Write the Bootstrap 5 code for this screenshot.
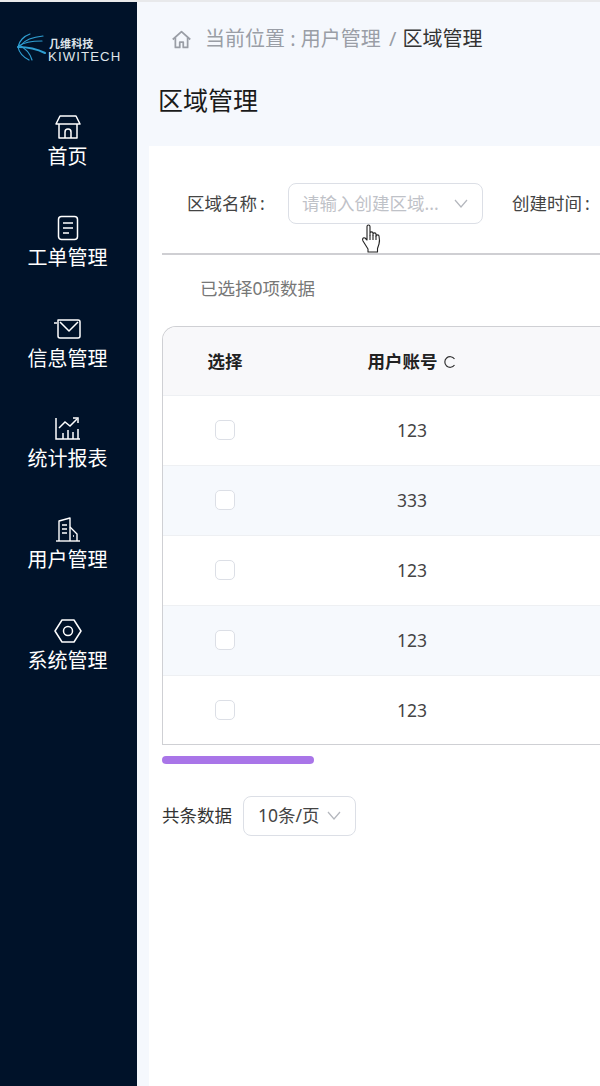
<!DOCTYPE html>
<html lang="zh-CN">
<head>
<meta charset="utf-8">
<title>区域管理</title>
<link href="https://cdn.jsdelivr.net/npm/bootstrap@5.3.0/dist/css/bootstrap.min.css" rel="stylesheet">
<style>
html,body{height:1086px;overflow:hidden}
body{font-family:"Noto Sans","Noto Sans CJK SC",sans-serif;background:#f5f8fd;font-size:17.5px;color:#333;width:600px}
.shell{height:1086px;width:600px;overflow:hidden;border-top:2px solid #e8e9eb}
.side{width:137px;flex:none;background:#001229;color:#fff}
.brand{height:60px;margin-top:31px;padding-left:16px;gap:2px}
.brand-txt{line-height:1;color:#dfe5ea;padding-top:5px}
.brand-cn{font-size:11px;font-weight:700;letter-spacing:.1px;padding-left:1px;margin-bottom:0}
.brand-en{font-family:"Liberation Sans",sans-serif;font-size:13.2px;letter-spacing:1.1px;margin-top:1px}
.menu-list{margin-top:20px}
.menu-item{height:100.8px;font-size:20px;line-height:28px;color:#fff;padding-right:2px}
.menu-item svg{display:block;height:28px;width:28px}
.menu-item span{display:block;margin-top:2px}
.main-col{flex:none;width:463px}
.crumbs{height:74px;padding-left:34px;font-size:20px;color:#9a9ea6}
.crumbs svg{margin-right:13px;width:21px;height:21px}
.crumbs b{font-weight:400;color:#333}
.crumb-sep{margin:0 1px 0 3px}
.page-title{font-size:25px;font-weight:400;color:#1a1a1a;margin:0;padding-left:21px;height:70px;line-height:49px}
.panel{background:#fff;margin-left:12px;height:942px;padding-left:13px;overflow:hidden}
.filter-row{height:109px;padding-top:7px;border-bottom:2px solid #cfcfd3;margin-right:-60px;padding-left:25px;white-space:nowrap}
.filter-box{width:195px;height:41px;margin:0 29px 0 23px;border:1px solid #dcdfe6;border-radius:8px;padding:0 14px 0 13px;color:#bfc2c8;flex:none}
.flab{color:#444;flex:none;width:78px;padding-top:1px}
.picked{height:71px;padding-left:38px;padding-bottom:4px;color:#777;font-size:17.5px}
.grid-wrap{width:480px;height:419px;border:1px solid #cfd0d4;border-right:0;border-top-left-radius:14px;overflow:hidden}
.grid-tb{table-layout:fixed;width:480px;margin:0;color:#444;--bs-table-bg:transparent}
.grid-tb th,.grid-tb td{text-align:center;vertical-align:middle;padding:0;border-bottom:1px solid #eef0f3}
.grid-tb th{height:68px;background:#f8f8fa;color:#222;font-weight:700}
.grid-tb td{height:70px}
.grid-tb tr:last-child td{border-bottom:0}
.grid-tb .alt td{background:#f6f9fd}
.tick{display:block;width:20px;height:20px;margin:0 auto;border:1px solid #dcdfe6;border-radius:5px;background:#fff}
.refresh{font-weight:400;margin-left:5px;display:inline-block;width:14px;height:14px;vertical-align:-1px}
.scroll-thumb{width:152px;height:7.5px;border-radius:4px;background:#a975e8;margin-top:11px}
.pager{margin-top:32px;gap:11px;color:#333}
.page-box{width:113px;height:40px;border:1px solid #dcdfe6;border-radius:8px;padding:0 14px;color:#444}
.pointer{position:absolute;left:361px;top:224px;width:22px;height:29px}
</style>
</head>
<body>
<div class="shell d-flex">
  <aside class="side">
    <div class="brand d-flex align-items-start">
      <svg width="30" height="28" viewBox="0 0 30 28" fill="none" stroke="#2f9fd2" stroke-width="1.2" stroke-linecap="round">
        <path d="M14 1C8 3 3 8 2 14c1 5 5 10 11 13"/>
        <path d="M27 3C17 4 9 7 5 12"/>
        <path d="M26 8C16 8 8 9 3 13"/>
        <path d="M2 14c7 0 17 1 27 6" stroke-width="2"/>
        <path d="M3 12c6 3 11 8 13 15"/>
      </svg>
      <div class="brand-txt">
        <div class="brand-cn">几维科技</div>
        <div class="brand-en">KIWITECH</div>
      </div>
    </div>
    <nav class="menu-list">
      <a class="menu-item d-flex flex-column align-items-center text-decoration-none">
        <svg viewBox="0 0 28 28" fill="none" stroke="#fff" stroke-width="1.5" stroke-linejoin="round"><path d="M6 3h16l4 8H2z"/><path d="M5 11v14h18V11"/><path d="M11 25v-6a3 3 0 0 1 6 0v6"/></svg>
        <span>首页</span>
      </a>
      <a class="menu-item d-flex flex-column align-items-center text-decoration-none">
        <svg viewBox="0 0 28 28" fill="none" stroke="#fff" stroke-width="1.5" stroke-linejoin="round"><rect x="4.500" y="2.500" width="19" height="23" rx="3"/><path d="M9 9h10M9 14h10M9 19h6"/></svg>
        <span>工单管理</span>
      </a>
      <a class="menu-item d-flex flex-column align-items-center text-decoration-none">
        <svg viewBox="0 0 28 28" fill="none" stroke="#fff" stroke-width="1.5" stroke-linejoin="round"><path d="M4 5h20a2 2 0 0 1 2 2v14a2 2 0 0 1-2 2H6a2 2 0 0 1-2-2z"/><path d="M6 7l9 9 9-9"/><path d="M0 8h3"/></svg>
        <span>信息管理</span>
      </a>
      <a class="menu-item d-flex flex-column align-items-center text-decoration-none">
        <svg viewBox="0 0 28 28" fill="none" stroke="#fff" stroke-width="1.5"><path d="M2 3v21h24"/><path d="M9 24v-6M14 24v-9M19 24v-7M24 24v-10"/><path d="M5 13l6-6 5 4 7-7"/><path d="M19 3h5v5"/></svg>
        <span>统计报表</span>
      </a>
      <a class="menu-item d-flex flex-column align-items-center text-decoration-none">
        <svg viewBox="0 0 28 28" fill="none" stroke="#fff" stroke-width="1.4" stroke-linejoin="round"><path d="M2 25h24"/><path d="M5 25V5l11-3v23"/><path d="M16 11l7 7v7"/><path d="M8 9h5M8 13h5M8 17h5M19 20h1"/></svg>
        <span>用户管理</span>
      </a>
      <a class="menu-item d-flex flex-column align-items-center text-decoration-none">
        <svg viewBox="0 0 28 28" fill="none" stroke="#fff" stroke-width="1.5" stroke-linejoin="round"><path d="M8 3h12l7 11-7 11H8L1 14z"/><circle cx="14" cy="14" r="4.500"/></svg>
        <span>系统管理</span>
      </a>
    </nav>
  </aside>
  <main class="main-col">
    <div class="crumbs d-flex align-items-center">
      <svg viewBox="0 0 24 24" fill="none" stroke="#9a9ea6" stroke-width="2" stroke-linejoin="round"><path d="M2 12 12 3l10 9"/><path d="M5 10v11h5v-6h4v6h5V10"/></svg>
      <span>当前位置 : 用户管理<span class="crumb-sep">&nbsp;/&nbsp;</span><b>区域管理</b></span>
    </div>
    <h1 class="page-title">区域管理</h1>
    <section class="panel">
      <div class="filter-row d-flex align-items-center">
        <span class="flab">区域名称&#8201;:</span>
        <div class="filter-box d-flex align-items-center justify-content-between">
          <span>请输入创建区域...</span>
          <svg width="14" height="9" viewBox="0 0 14 9" fill="none" stroke="#b4b7bd" stroke-width="1.2"><path d="M1 1l6 7 6-7"/></svg>
        </div>
        <span class="flab">创建时间&#8201;:</span>
      </div>
      <div class="picked d-flex align-items-center">已选择0项数据</div>
      <div class="grid-wrap">
        <table class="table grid-tb">
          <colgroup><col style="width:124px"><col style="width:250px"><col></colgroup>
          <thead><tr><th>选择</th><th>用户账号<svg class="refresh" viewBox="0 0 14 14" fill="none" stroke="#333" stroke-width="1.2"><path d="M11.500 4A5.300 5.300 0 1 0 11.500 10"/></svg></th><th></th></tr></thead>
          <tbody>
            <tr><td><span class="tick"></span></td><td>123</td><td></td></tr>
            <tr class="alt"><td><span class="tick"></span></td><td>333</td><td></td></tr>
            <tr><td><span class="tick"></span></td><td>123</td><td></td></tr>
            <tr class="alt"><td><span class="tick"></span></td><td>123</td><td></td></tr>
            <tr><td><span class="tick"></span></td><td>123</td><td></td></tr>
          </tbody>
        </table>
      </div>
      <div class="scroll-thumb"></div>
      <div class="pager d-flex align-items-center">
        <span>共条数据</span>
        <div class="page-box d-flex align-items-center justify-content-between">
          <span>10条/页</span>
          <svg width="14" height="9" viewBox="0 0 14 9" fill="none" stroke="#b4b7bd" stroke-width="1.2"><path d="M1 1l6 7 6-7"/></svg>
        </div>
      </div>
    </section>
  </main>
</div>
<svg class="pointer" viewBox="0 0 22 29" fill="#fff" stroke="#222" stroke-width="1.1" stroke-linejoin="round"><path d="M6 2.500c0-2 3-2 3 0V11l0-2c0-1.500 3-1.500 3 0v2-1c0-1.500 3-1.500 3 0v2c0-1.500 3-1.500 3 0 0 0 1 5 0 8l-1.500 4.500V28H7v-3L2 17c-1-2 0-4 2-3l2 2z"/><path d="M9 11v5M12 11v5M15 12v4" fill="none"/></svg>
<script src="https://cdn.jsdelivr.net/npm/bootstrap@5.3.0/dist/js/bootstrap.bundle.min.js"></script>
</body>
</html>
